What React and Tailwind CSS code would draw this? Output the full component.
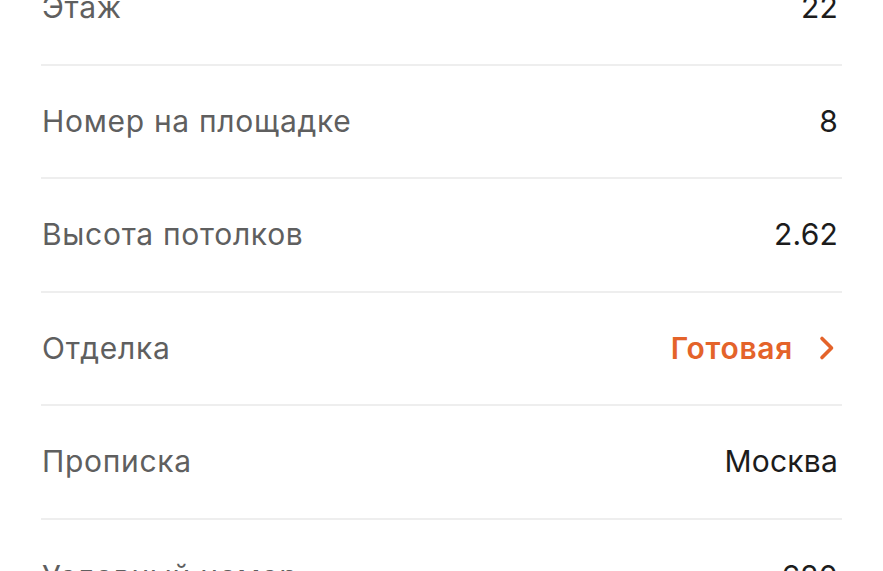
import React from 'react';

const ROWS = [
  { label: 'Этаж', value: '22' },
  { label: 'Номер на площадке', value: '8' },
  { label: 'Высота потолков', value: '2.62' },
  { label: 'Отделка', value: 'Готовая', link: true },
  { label: 'Прописка', value: 'Москва' },
  { label: 'Условный номер', value: '620' },
];

const Chevron = () => (
  <svg width="16" height="26" viewBox="0 0 16 26" fill="none" className="ml-[26px] mr-[3px]">
    <path d="M3 3.5 L12.5 13 L3 22.5" stroke="#e4632a" strokeWidth="3.6" strokeLinecap="round" strokeLinejoin="round" />
  </svg>
);

export default function App() {
  return (
    <div className="w-[883px] h-[571px] overflow-hidden bg-white" style={{ fontFamily: 'Inter, "Liberation Sans", sans-serif' }}>
      <div className="-mt-[48px] px-[41px]">
        {ROWS.map((row, i) => (
          <div
            key={i}
            className={`flex items-center justify-between h-[113.5px] pl-px pr-[4px] ${i < ROWS.length - 1 ? 'border-b-2 border-[#eeeeee]' : ''}`}
          >
            <span className="text-[30px] text-[#5f5f5f] tracking-[0.7px]">{row.label}</span>
            {row.link ? (
              <span className="flex items-center">
                <span className="text-[30px] font-semibold text-[#e4632a] tracking-[0.7px]">{row.value}</span>
                <Chevron />
              </span>
            ) : (
              <span className="text-[30px] text-[#1c1c1c] tracking-[0.2px]">{row.value}</span>
            )}
          </div>
        ))}
      </div>
    </div>
  );
}
